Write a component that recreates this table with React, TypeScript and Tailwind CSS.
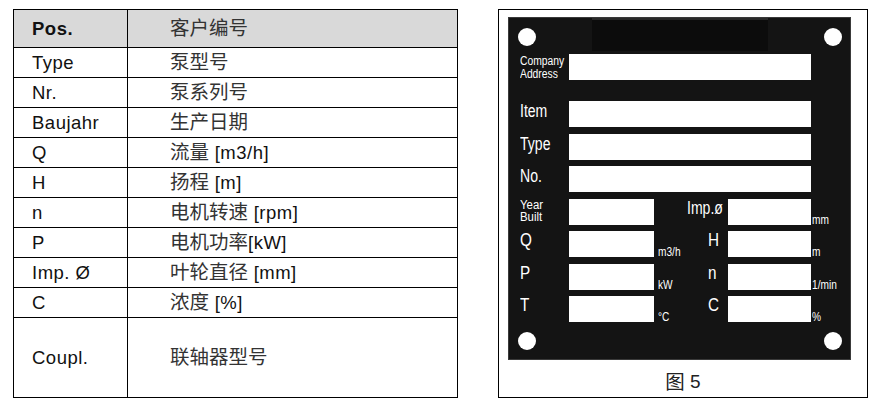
import React from "react";

const rows: [string, string][] = [
  ["Type", "泵型号"],
  ["Nr.", "泵系列号"],
  ["Baujahr", "生产日期"],
  ["Q", "流量 [m3/h]"],
  ["H", "扬程 [m]"],
  ["n", "电机转速 [rpm]"],
  ["P", "电机功率[kW]"],
  ["Imp. Ø", "叶轮直径 [mm]"],
  ["C", "浓度 [%]"],
];

// CJK glyphs are a bit bigger than the latin text in the scan
const Mixed = ({ text }: { text: string }) => (
  <span>
    {text.split(/([\u4e00-\u9fff]+)/).map((part, i) =>
      /[\u4e00-\u9fff]/.test(part) ? (
        <span key={i} className="text-[19.5px] text-[#333] tracking-normal">
          {part}
        </span>
      ) : (
        <span key={i}>{part}</span>
      )
    )}
  </span>
);

// narrow plate lettering
const N = ({ children, s = "scale-x-[0.78]" }: { children: React.ReactNode; s?: string }) => (
  <span className={`inline-block origin-left whitespace-nowrap ${s}`}>{children}</span>
);

const Hole = () => <div className="w-[18px] h-[18px] rounded-full bg-white shrink-0" />;

const Box = ({ w }: { w: string }) => <div className={`${w} h-full bg-white shrink-0`} />;

const WideRow = ({ label, small }: { label: string[]; small?: boolean }) => (
  <div className="flex h-[26px]">
    <div
      className={`w-[60px] pl-[11px] text-white ${
        small ? "text-[12px] leading-[12.5px] pt-[1px]" : "text-[18px] leading-[18px] pt-[1px]"
      }`}
    >
      {label.map((l) => (
        <div key={l} className="h-[12.5px] first:h-auto">
          <N s={small ? "scale-x-[0.86]" : "scale-x-[0.78]"}>{l}</N>
        </div>
      ))}
    </div>
    <Box w="w-[242px]" />
  </div>
);

const PairRow = ({
  label,
  unit1,
  label2,
  unit2,
  small,
  wideLabel,
}: {
  label: string[];
  unit1: string;
  label2: string;
  unit2: string;
  small?: boolean;
  wideLabel?: boolean;
}) => (
  <div className="flex h-[26px]">
    <div
      className={`w-[60px] pl-[11px] text-white ${
        small ? "text-[12px] leading-[12.5px]" : "text-[18px] leading-[18px]"
      }`}
    >
      {label.map((l) => (
        <div key={l}>
          <N s={small ? "scale-x-[0.95]" : "scale-x-[0.85]"}>{l}</N>
        </div>
      ))}
    </div>
    <Box w="w-[85px]" />
    <div className="w-[32px] flex items-end pl-[4px] text-white text-[13px] leading-[13px] -mb-[1px]">
      <N>{unit1}</N>
    </div>
    <div
      className={`w-[42px] text-white text-[18px] leading-[18px] ${wideLabel ? "pl-[1px]" : "pl-[22px]"}`}
    >
      <N s={wideLabel ? "scale-x-[0.78]" : "scale-x-[0.85]"}>{label2}</N>
    </div>
    <Box w="w-[83px]" />
    <div className="flex items-end pl-[1px] text-white text-[13px] leading-[13px] -mb-[1px]">
      <N>{unit2}</N>
    </div>
  </div>
);

export default function App() {
  return (
    <div className="w-[880px] h-[410px] bg-white flex pl-[13px] pt-[9px] font-['Liberation_Sans','Noto_Sans_CJK_SC',sans-serif] text-[#111]">
      {/* left table */}
      <div className="w-[445px] h-[389px] border border-black flex flex-col text-[18.5px] tracking-[0.5px] shrink-0">
        <div className="h-[37px] flex bg-[#d9d9d9]">
          <div className="w-[113px] pl-[18px] flex items-center font-bold">Pos.</div>
          <div className="flex-1 border-l border-black pl-[42px] flex items-center">
            <Mixed text="客户编号" />
          </div>
        </div>
        {rows.map(([a, b]) => (
          <div key={a} className="h-[30px] flex border-t border-black">
            <div className="w-[113px] pl-[18px] flex items-center">{a}</div>
            <div className="flex-1 border-l border-black pl-[42px] flex items-center">
              <Mixed text={b} />
            </div>
          </div>
        ))}
        <div className="flex-1 flex border-t border-black">
          <div className="w-[113px] pl-[18px] flex items-center">Coupl.</div>
          <div className="flex-1 border-l border-black pl-[42px] flex items-center">
            <Mixed text="联轴器型号" />
          </div>
        </div>
      </div>

      {/* right figure */}
      <div className="ml-[40px] w-[370px] h-[389px] border border-black flex flex-col shrink-0">
        <div className="ml-[9px] mt-[7px] w-[343px] h-[344px] bg-[#141414] border border-[#3a3a3a] flex flex-col">
          <div className="h-[32px] flex items-start">
            <div className="ml-[9px] mt-[10px]">
              <Hole />
            </div>
            <div className="ml-[56px] w-[176px] h-[33px] bg-[#0c0c0c] border-t-2 border-[#2a2a2a]" />
            <div className="ml-[56px] mt-[10px]">
              <Hole />
            </div>
          </div>

          <div className="mt-[4px]">
            <WideRow label={["Company", "Address"]} small />
          </div>
          <div className="mt-[21px] flex flex-col gap-[6.5px]">
            <WideRow label={["Item"]} />
            <WideRow label={["Type"]} />
            <WideRow label={["No."]} />
            <PairRow label={["Year", "Built"]} small unit1="" label2="Imp.ø" wideLabel unit2="mm" />
            <PairRow label={["Q"]} unit1="m3/h" label2="H" unit2="m" />
            <PairRow label={["P"]} unit1="kW" label2="n" unit2="1/min" />
            <PairRow label={["T"]} unit1="°C" label2="C" unit2="%" />
          </div>

          <div className="mt-[10px] flex">
            <div className="ml-[9px]">
              <Hole />
            </div>
            <div className="ml-[288px]">
              <Hole />
            </div>
          </div>
        </div>
        <div className="flex-1 flex items-center justify-center text-[19px] text-[#222] pt-[8px]">
          <span className="text-[19.5px]">图</span>&nbsp;5
        </div>
      </div>
    </div>
  );
}
